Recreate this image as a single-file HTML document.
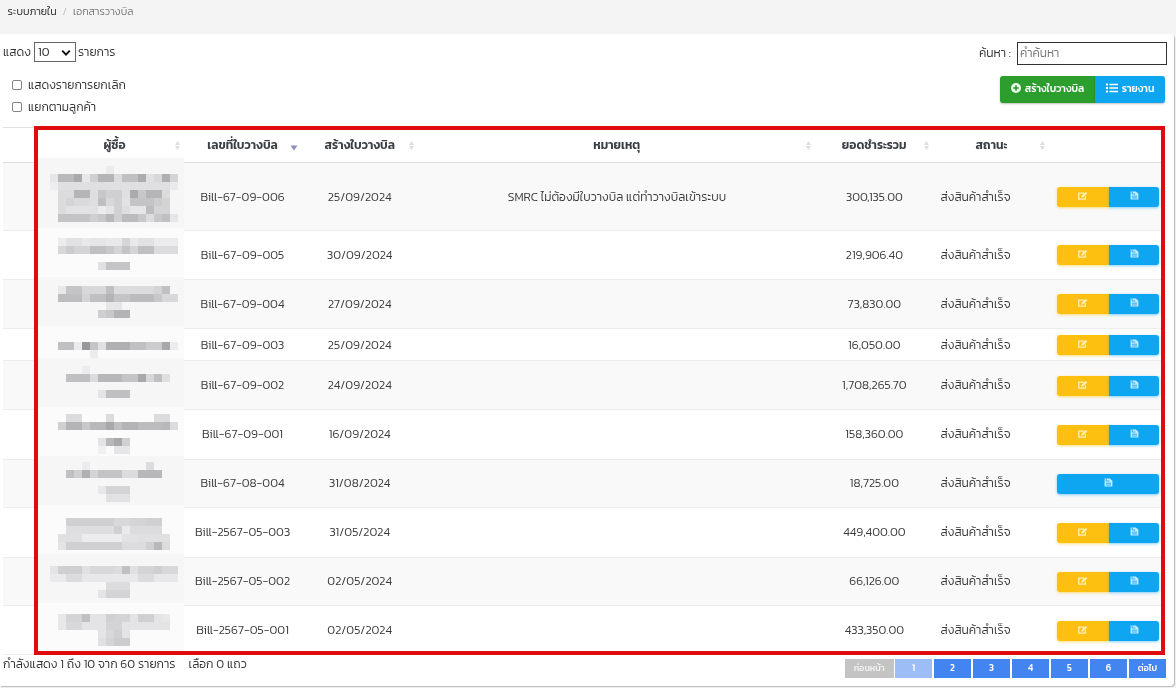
<!DOCTYPE html>
<html lang="th">
<head>
<meta charset="utf-8">
<title>เอกสารวางบิล</title>
<style>
*{box-sizing:border-box;margin:0;padding:0}
html,body{width:1176px;height:688px;overflow:hidden;background:#f4f4f4}
body{position:relative;font-family:"Kanit","Prompt","Liberation Sans","Noto Sans Thai","Loma",sans-serif;font-weight:300;font-size:12.1px;color:#3a3a3a;line-height:1}
.wrap{position:absolute;left:0;top:0;width:1176px;height:688px;overflow:hidden;will-change:transform}
.abs{position:absolute;white-space:nowrap}
.card{position:absolute;left:0;top:34px;width:1174px;height:652px;background:#fff;border-radius:0 4px 4px 0;box-shadow:1px 1px 1px rgba(0,0,0,.24)}
.bc{left:7.6px;top:3px;height:16px;line-height:16px;font-size:10.6px;color:#222}
.bc .s{color:#bbb;padding:0 6px}
.bc .c{color:#777}
.lbl{font-size:12.1px;line-height:20px;height:20px;color:#333}
.sel{left:34px;top:42px;width:42px;height:20px;border:1px solid #666;border-radius:0;background:#fff;font-size:12px;line-height:18px;padding-left:3px;color:#222}
.cb{width:9.5px;height:9.5px;border:1px solid #858585;border-radius:2px;background:#fff}
.inp{left:1016.5px;top:42px;width:150.5px;height:23px;border:1px solid #333;border-radius:0;background:#fff;font-size:12px;line-height:20px;padding-left:2.5px;color:#757575}
.btn{color:#fff;font-size:10.4px;font-weight:500;text-align:center;height:27px;line-height:25px;top:76px;box-shadow:0 1px 2px rgba(0,0,0,.25)}
.g{background:#2c9e2e;left:1000px;width:95px;border-radius:3px 0 0 3px}
.b{background:#0fa6f1;left:1095px;width:70px;border-radius:0 3px 3px 0}
.tline{position:absolute;left:3px;width:1162px;height:1px;background:#e0e0e0}
.stripe{position:absolute;left:3px;width:1162px;background:#f9f9f9}
.th{font-weight:600;font-size:12px;color:#3b4046;height:34px;line-height:34px;top:128px;text-align:center;width:200px;margin-left:-100px}
.td{height:24px;line-height:24px;text-align:center;width:300px;margin-left:-150px;color:#3a3a3a}
.ab{height:20.4px}
.y{box-shadow:0 1px 3px rgba(253,192,17,.55);background:#fdc011;left:1057px;width:52px;border-radius:3px 0 0 3px}
.u{box-shadow:0 1px 3px rgba(15,166,241,.5);background:#0fa6f1;left:1109px;width:50px;border-radius:0 3px 3px 0}
.u.full{left:1057px;width:102px;border-radius:3px}
.red{position:absolute;left:34px;top:126px;width:1131px;height:529px;border:4px solid #e00b0b}
.pg{top:659px;height:19px;line-height:19px;color:#fff;font-size:9.4px;font-weight:500;text-align:center;background:#4285f0}
.info{left:3px;top:654px;height:20px;line-height:20px;font-size:12.15px;color:#333}
</style>
</head>
<body>
<div class="wrap">
<div class="card"></div>
<div class="abs bc">ระบบภายใน<span class="s">/</span><span class="c">เอกสารวางบิล</span></div>
<div class="abs lbl" style="left:3px;top:42px">แสดง</div>
<div class="abs sel">10</div>
<svg class="abs" style="left:61.4px;top:48.5px" width="10" height="8" viewBox="0 0 10 8"><path d="M1.2 1.6 L5 5.6 L8.8 1.6" fill="none" stroke="#111" stroke-width="1.9"/></svg>
<div class="abs lbl" style="left:78px;top:42px">รายการ</div>
<div class="abs cb" style="left:12px;top:80px"></div>
<div class="abs lbl" style="left:28px;top:75px">แสดงรายการยกเลิก</div>
<div class="abs cb" style="left:12px;top:102px"></div>
<div class="abs lbl" style="left:28px;top:97px">แยกตามลูกค้า</div>
<div class="abs lbl" style="left:979px;top:43px">ค้นหา :</div>
<div class="abs inp">คำค้นหา</div>
<div class="abs btn g"><svg width="10" height="10" viewBox="0 0 10 10" style="vertical-align:-1px;margin-right:4px"><circle cx="5" cy="5" r="5" fill="#e8f5e9"/><path d="M5 2.2v5.6M2.2 5h5.6" stroke="#2c9e2e" stroke-width="1.6"/></svg>สร้างใบวางบิล</div>
<div class="abs btn b"><svg width="12" height="10" viewBox="0 0 12 10" style="vertical-align:-1px;margin-right:4px"><path d="M0 1.5h2M0 5h2M0 8.5h2" stroke="#fff" stroke-width="1.8"/><path d="M3.4 1.5H12M3.4 5H12M3.4 8.5H12" stroke="#fff" stroke-width="1.6"/></svg>รายงาน</div>
<div class="tline" style="top:127px"></div>
<div class="stripe" style="top:163px;height:68px"></div>
<div class="stripe" style="top:280px;height:49px"></div>
<div class="stripe" style="top:361px;height:49px"></div>
<div class="stripe" style="top:459px;height:49px"></div>
<div class="stripe" style="top:557px;height:49px"></div>
<div class="tline" style="top:162px;background:#dcdcdc"></div>
<div class="tline" style="top:230px;background:#ededed"></div>
<div class="tline" style="top:279px;background:#ededed"></div>
<div class="tline" style="top:328px;background:#ededed"></div>
<div class="tline" style="top:360px;background:#ededed"></div>
<div class="tline" style="top:409px;background:#ededed"></div>
<div class="tline" style="top:458.5px;background:#ededed"></div>
<div class="tline" style="top:507px;background:#ededed"></div>
<div class="tline" style="top:556.5px;background:#ededed"></div>
<div class="tline" style="top:605px;background:#ededed"></div>
<div class="tline" style="top:654px;background:#ededed"></div>
<div class="abs th" style="left:114.5px">ผู้ซื้อ</div>
<svg class="abs" style="left:174.5px;top:140.5px" width="5" height="9" viewBox="0 0 5 9"><path d="M2.5 0L5 4H0z M0 5H5L2.5 9z" fill="#dedede"/></svg>
<div class="abs th" style="left:242.6px">เลขที่ใบวางบิล</div>
<svg class="abs" style="left:290px;top:145px" width="8" height="6" viewBox="0 0 8 6"><path d="M0.5 0.5h7L4 5.5z" fill="#8c8fc0"/></svg>
<div class="abs th" style="left:359.8px">สร้างใบวางบิล</div>
<svg class="abs" style="left:408.5px;top:140.5px" width="5" height="9" viewBox="0 0 5 9"><path d="M2.5 0L5 4H0z M0 5H5L2.5 9z" fill="#dedede"/></svg>
<div class="abs th" style="left:616.8px">หมายเหตุ</div>
<svg class="abs" style="left:806.1px;top:140.5px" width="5" height="9" viewBox="0 0 5 9"><path d="M2.5 0L5 4H0z M0 5H5L2.5 9z" fill="#dedede"/></svg>
<div class="abs th" style="left:874.2px">ยอดชำระรวม</div>
<svg class="abs" style="left:923.5px;top:140.5px" width="5" height="9" viewBox="0 0 5 9"><path d="M2.5 0L5 4H0z M0 5H5L2.5 9z" fill="#dedede"/></svg>
<div class="abs th" style="left:991.5px">สถานะ</div>
<svg class="abs" style="left:1040.3px;top:140.5px" width="5" height="9" viewBox="0 0 5 9"><path d="M2.5 0L5 4H0z M0 5H5L2.5 9z" fill="#dedede"/></svg>
<svg class="abs" style="left:38px;top:158px" width="146" height="493" viewBox="38 158 146 493" shape-rendering="crispEdges">
<rect x="38" y="158" width="146" height="493" fill="#fbfbfb"/>
<rect x="38" y="158" width="146" height="70" fill="#f6f6f7"/>
<rect x="38" y="277" width="146" height="49" fill="#f6f6f7"/>
<rect x="38" y="358" width="146" height="49" fill="#f6f6f7"/>
<rect x="38" y="456" width="146" height="49" fill="#f6f6f7"/>
<rect x="38" y="554" width="146" height="49" fill="#f6f6f7"/>
<rect x="106" y="166" width="8" height="8" fill="#ececef"/>
<rect x="50" y="174" width="8" height="8" fill="#e6e6e9"/>
<rect x="58" y="174" width="16" height="8" fill="#b9b9bc"/>
<rect x="74" y="174" width="8" height="8" fill="#a9a9ac"/>
<rect x="82" y="174" width="8" height="8" fill="#e8e8eb"/>
<rect x="90" y="174" width="8" height="8" fill="#d0d0d3"/>
<rect x="98" y="174" width="16" height="8" fill="#b5b5b8"/>
<rect x="114" y="174" width="8" height="8" fill="#dcdcdf"/>
<rect x="122" y="174" width="16" height="8" fill="#c0c0c3"/>
<rect x="138" y="174" width="8" height="8" fill="#acacaf"/>
<rect x="146" y="174" width="8" height="8" fill="#e0e0e3"/>
<rect x="154" y="174" width="8" height="8" fill="#d8d8db"/>
<rect x="162" y="174" width="8" height="8" fill="#b0b0b3"/>
<rect x="170" y="174" width="8" height="8" fill="#d4d4d7"/>
<rect x="50" y="182" width="8" height="8" fill="#eeeef1"/>
<rect x="58" y="182" width="112" height="8" fill="#dfdfe2"/>
<rect x="170" y="182" width="8" height="8" fill="#eaeaed"/>
<rect x="58" y="190" width="16" height="8" fill="#dcdcdf"/>
<rect x="74" y="190" width="16" height="8" fill="#b5b5b8"/>
<rect x="90" y="190" width="8" height="8" fill="#dedee1"/>
<rect x="98" y="190" width="8" height="8" fill="#c8c8cb"/>
<rect x="106" y="190" width="16" height="8" fill="#d0d0d3"/>
<rect x="122" y="190" width="8" height="8" fill="#e0e0e3"/>
<rect x="130" y="190" width="8" height="8" fill="#aaaaad"/>
<rect x="138" y="190" width="8" height="8" fill="#c8c8cb"/>
<rect x="146" y="190" width="16" height="8" fill="#b5b5b8"/>
<rect x="162" y="190" width="8" height="8" fill="#dcdcdf"/>
<rect x="58" y="198" width="8" height="8" fill="#dcdcdf"/>
<rect x="66" y="198" width="8" height="8" fill="#d4d4d7"/>
<rect x="74" y="198" width="16" height="8" fill="#dadadd"/>
<rect x="90" y="198" width="8" height="8" fill="#dedee1"/>
<rect x="98" y="198" width="8" height="8" fill="#bfbfc2"/>
<rect x="106" y="198" width="8" height="8" fill="#d8d8db"/>
<rect x="114" y="198" width="8" height="8" fill="#d0d0d3"/>
<rect x="122" y="198" width="8" height="8" fill="#e2e2e5"/>
<rect x="130" y="198" width="24" height="8" fill="#c4c4c7"/>
<rect x="154" y="198" width="8" height="8" fill="#cdcdd0"/>
<rect x="162" y="198" width="8" height="8" fill="#d4d4d7"/>
<rect x="58" y="206" width="8" height="8" fill="#dcdcdf"/>
<rect x="66" y="206" width="32" height="8" fill="#e2e2e5"/>
<rect x="98" y="206" width="8" height="8" fill="#ececef"/>
<rect x="106" y="206" width="8" height="8" fill="#e4e4e7"/>
<rect x="114" y="206" width="8" height="8" fill="#d0d0d3"/>
<rect x="122" y="206" width="8" height="8" fill="#dedee1"/>
<rect x="130" y="206" width="16" height="8" fill="#e6e6e9"/>
<rect x="146" y="206" width="8" height="8" fill="#bcbcbf"/>
<rect x="154" y="206" width="16" height="8" fill="#d4d4d7"/>
<rect x="58" y="214" width="32" height="8" fill="#c4c4c7"/>
<rect x="90" y="214" width="8" height="8" fill="#cfcfd2"/>
<rect x="98" y="214" width="8" height="8" fill="#c8c8cb"/>
<rect x="106" y="214" width="8" height="8" fill="#b8b8bb"/>
<rect x="114" y="214" width="8" height="8" fill="#d0d0d3"/>
<rect x="122" y="214" width="16" height="8" fill="#bbbbbe"/>
<rect x="138" y="214" width="8" height="8" fill="#c8c8cb"/>
<rect x="146" y="214" width="8" height="8" fill="#dcdcdf"/>
<rect x="154" y="214" width="8" height="8" fill="#c8c8cb"/>
<rect x="162" y="214" width="8" height="8" fill="#c0c0c3"/>
<rect x="170" y="214" width="8" height="8" fill="#e6e6e9"/>
<rect x="58" y="238" width="8" height="8" fill="#ececef"/>
<rect x="66" y="238" width="16" height="8" fill="#e2e2e5"/>
<rect x="82" y="238" width="8" height="8" fill="#e9e9ec"/>
<rect x="90" y="238" width="16" height="8" fill="#e5e5e8"/>
<rect x="106" y="238" width="16" height="8" fill="#e9e9ec"/>
<rect x="122" y="238" width="8" height="8" fill="#d6d6d9"/>
<rect x="130" y="238" width="8" height="8" fill="#e9e9ec"/>
<rect x="138" y="238" width="16" height="8" fill="#e2e2e5"/>
<rect x="154" y="238" width="24" height="8" fill="#ebebee"/>
<rect x="58" y="246" width="8" height="8" fill="#d8d8db"/>
<rect x="66" y="246" width="8" height="8" fill="#cccccf"/>
<rect x="74" y="246" width="16" height="8" fill="#d4d4d7"/>
<rect x="90" y="246" width="16" height="8" fill="#c0c0c3"/>
<rect x="106" y="246" width="8" height="8" fill="#c8c8cb"/>
<rect x="114" y="246" width="8" height="8" fill="#d4d4d7"/>
<rect x="122" y="246" width="8" height="8" fill="#c4c4c7"/>
<rect x="130" y="246" width="8" height="8" fill="#d4d4d7"/>
<rect x="138" y="246" width="16" height="8" fill="#c0c0c3"/>
<rect x="154" y="246" width="24" height="8" fill="#dcdcdf"/>
<rect x="98" y="262" width="8" height="8" fill="#e0e0e3"/>
<rect x="106" y="262" width="24" height="8" fill="#c4c4c7"/>
<rect x="58" y="286" width="8" height="8" fill="#e8e8eb"/>
<rect x="66" y="286" width="16" height="8" fill="#c4c4c7"/>
<rect x="82" y="286" width="24" height="8" fill="#d8d8db"/>
<rect x="106" y="286" width="8" height="8" fill="#c0c0c3"/>
<rect x="114" y="286" width="40" height="8" fill="#dcdcdf"/>
<rect x="154" y="286" width="8" height="8" fill="#d4d4d7"/>
<rect x="162" y="286" width="8" height="8" fill="#c0c0c3"/>
<rect x="58" y="294" width="24" height="8" fill="#bebec1"/>
<rect x="82" y="294" width="8" height="8" fill="#d4d4d7"/>
<rect x="90" y="294" width="16" height="8" fill="#c0c0c3"/>
<rect x="106" y="294" width="8" height="8" fill="#b4b4b7"/>
<rect x="114" y="294" width="16" height="8" fill="#c4c4c7"/>
<rect x="130" y="294" width="24" height="8" fill="#bcbcbf"/>
<rect x="154" y="294" width="8" height="8" fill="#c8c8cb"/>
<rect x="162" y="294" width="16" height="8" fill="#d8d8db"/>
<rect x="106" y="302" width="16" height="8" fill="#e6e6e9"/>
<rect x="98" y="310" width="8" height="8" fill="#cfcfd2"/>
<rect x="106" y="310" width="8" height="8" fill="#c8c8cb"/>
<rect x="114" y="310" width="16" height="8" fill="#b4b4b7"/>
<rect x="58" y="342" width="16" height="8" fill="#c0c0c3"/>
<rect x="74" y="342" width="8" height="8" fill="#ececef"/>
<rect x="82" y="342" width="8" height="8" fill="#98989b"/>
<rect x="90" y="342" width="8" height="8" fill="#c4c4c7"/>
<rect x="98" y="342" width="8" height="8" fill="#e0e0e3"/>
<rect x="106" y="342" width="24" height="8" fill="#b0b0b3"/>
<rect x="130" y="342" width="16" height="8" fill="#c0c0c3"/>
<rect x="146" y="342" width="16" height="8" fill="#cccccf"/>
<rect x="162" y="342" width="8" height="8" fill="#a8a8ab"/>
<rect x="170" y="342" width="8" height="8" fill="#ececef"/>
<rect x="90" y="350" width="8" height="8" fill="#ececef"/>
<rect x="82" y="366" width="8" height="8" fill="#ececef"/>
<rect x="66" y="374" width="24" height="8" fill="#c0c0c3"/>
<rect x="90" y="374" width="8" height="8" fill="#dcdcdf"/>
<rect x="98" y="374" width="24" height="8" fill="#b8b8bb"/>
<rect x="122" y="374" width="16" height="8" fill="#c4c4c7"/>
<rect x="138" y="374" width="8" height="8" fill="#a8a8ab"/>
<rect x="146" y="374" width="8" height="8" fill="#d8d8db"/>
<rect x="154" y="374" width="8" height="8" fill="#c0c0c3"/>
<rect x="162" y="374" width="8" height="8" fill="#e0e0e3"/>
<rect x="98" y="390" width="8" height="8" fill="#e4e4e7"/>
<rect x="106" y="390" width="24" height="8" fill="#c0c0c3"/>
<rect x="66" y="414" width="16" height="8" fill="#dcdcdf"/>
<rect x="106" y="414" width="8" height="8" fill="#dcdcdf"/>
<rect x="154" y="414" width="16" height="8" fill="#dcdcdf"/>
<rect x="58" y="422" width="8" height="8" fill="#d0d0d3"/>
<rect x="66" y="422" width="16" height="8" fill="#b4b4b7"/>
<rect x="82" y="422" width="8" height="8" fill="#c8c8cb"/>
<rect x="90" y="422" width="16" height="8" fill="#b8b8bb"/>
<rect x="106" y="422" width="8" height="8" fill="#a8a8ab"/>
<rect x="114" y="422" width="8" height="8" fill="#c0c0c3"/>
<rect x="122" y="422" width="16" height="8" fill="#b4b4b7"/>
<rect x="138" y="422" width="24" height="8" fill="#bcbcbf"/>
<rect x="162" y="422" width="8" height="8" fill="#b8b8bb"/>
<rect x="170" y="422" width="8" height="8" fill="#dcdcdf"/>
<rect x="98" y="438" width="8" height="8" fill="#e4e4e7"/>
<rect x="106" y="438" width="8" height="8" fill="#b8b8bb"/>
<rect x="114" y="438" width="8" height="8" fill="#a8a8ab"/>
<rect x="122" y="438" width="8" height="8" fill="#d0d0d3"/>
<rect x="98" y="446" width="8" height="8" fill="#f0f0f3"/>
<rect x="114" y="446" width="16" height="8" fill="#e6e6e9"/>
<rect x="82" y="462" width="8" height="8" fill="#ececef"/>
<rect x="146" y="462" width="8" height="8" fill="#dcdcdf"/>
<rect x="66" y="470" width="8" height="8" fill="#c0c0c3"/>
<rect x="74" y="470" width="8" height="8" fill="#d0d0d3"/>
<rect x="82" y="470" width="8" height="8" fill="#b0b0b3"/>
<rect x="90" y="470" width="8" height="8" fill="#d4d4d7"/>
<rect x="98" y="470" width="24" height="8" fill="#c4c4c7"/>
<rect x="122" y="470" width="16" height="8" fill="#dcdcdf"/>
<rect x="138" y="470" width="24" height="8" fill="#b8b8bb"/>
<rect x="98" y="486" width="8" height="8" fill="#e8e8eb"/>
<rect x="106" y="486" width="24" height="8" fill="#d4d4d7"/>
<rect x="106" y="494" width="24" height="8" fill="#e2e2e5"/>
<rect x="66" y="518" width="48" height="8" fill="#d0d0d3"/>
<rect x="114" y="518" width="16" height="8" fill="#d8d8db"/>
<rect x="130" y="518" width="16" height="8" fill="#d4d4d7"/>
<rect x="146" y="518" width="16" height="8" fill="#d0d0d3"/>
<rect x="66" y="526" width="48" height="8" fill="#dedee1"/>
<rect x="114" y="526" width="8" height="8" fill="#d0d0d3"/>
<rect x="122" y="526" width="8" height="8" fill="#eaeaed"/>
<rect x="130" y="526" width="32" height="8" fill="#dcdcdf"/>
<rect x="58" y="534" width="24" height="8" fill="#e0e0e3"/>
<rect x="82" y="534" width="40" height="8" fill="#ececef"/>
<rect x="122" y="534" width="16" height="8" fill="#e2e2e5"/>
<rect x="138" y="534" width="32" height="8" fill="#e0e0e3"/>
<rect x="58" y="542" width="8" height="8" fill="#e4e4e7"/>
<rect x="66" y="542" width="56" height="8" fill="#d0d0d3"/>
<rect x="122" y="542" width="24" height="8" fill="#dcdcdf"/>
<rect x="146" y="542" width="8" height="8" fill="#d0d0d3"/>
<rect x="154" y="542" width="8" height="8" fill="#b8b8bb"/>
<rect x="162" y="542" width="8" height="8" fill="#dcdcdf"/>
<rect x="50" y="566" width="8" height="8" fill="#e4e4e7"/>
<rect x="58" y="566" width="24" height="8" fill="#cfcfd2"/>
<rect x="82" y="566" width="8" height="8" fill="#e0e0e3"/>
<rect x="90" y="566" width="24" height="8" fill="#d8d8db"/>
<rect x="114" y="566" width="8" height="8" fill="#dcdcdf"/>
<rect x="122" y="566" width="8" height="8" fill="#c0c0c3"/>
<rect x="130" y="566" width="8" height="8" fill="#e0e0e3"/>
<rect x="138" y="566" width="16" height="8" fill="#d4d4d7"/>
<rect x="154" y="566" width="8" height="8" fill="#cfcfd2"/>
<rect x="162" y="566" width="16" height="8" fill="#d8d8db"/>
<rect x="50" y="574" width="16" height="8" fill="#eaeaed"/>
<rect x="66" y="574" width="16" height="8" fill="#dcdcdf"/>
<rect x="82" y="574" width="56" height="8" fill="#e8e8eb"/>
<rect x="138" y="574" width="16" height="8" fill="#dcdcdf"/>
<rect x="154" y="574" width="24" height="8" fill="#e8e8eb"/>
<rect x="106" y="582" width="24" height="8" fill="#dcdcdf"/>
<rect x="98" y="590" width="8" height="8" fill="#e4e4e7"/>
<rect x="106" y="590" width="24" height="8" fill="#d4d4d7"/>
<rect x="58" y="614" width="8" height="8" fill="#e8e8eb"/>
<rect x="66" y="614" width="16" height="8" fill="#d4d4d7"/>
<rect x="82" y="614" width="8" height="8" fill="#c0c0c3"/>
<rect x="90" y="614" width="16" height="8" fill="#e4e4e7"/>
<rect x="106" y="614" width="8" height="8" fill="#d0d0d3"/>
<rect x="114" y="614" width="16" height="8" fill="#d4d4d7"/>
<rect x="130" y="614" width="8" height="8" fill="#e4e4e7"/>
<rect x="138" y="614" width="16" height="8" fill="#d0d0d3"/>
<rect x="154" y="614" width="8" height="8" fill="#e4e4e7"/>
<rect x="162" y="614" width="8" height="8" fill="#e8e8eb"/>
<rect x="58" y="622" width="8" height="8" fill="#e8e8eb"/>
<rect x="66" y="622" width="16" height="8" fill="#d8d8db"/>
<rect x="82" y="622" width="24" height="8" fill="#e4e4e7"/>
<rect x="106" y="622" width="16" height="8" fill="#d4d4d7"/>
<rect x="122" y="622" width="48" height="8" fill="#e4e4e7"/>
<rect x="98" y="630" width="8" height="8" fill="#e4e4e7"/>
<rect x="106" y="630" width="8" height="8" fill="#d8d8db"/>
<rect x="114" y="630" width="8" height="8" fill="#d0d0d3"/>
<rect x="122" y="630" width="8" height="8" fill="#e4e4e7"/>
<rect x="98" y="638" width="8" height="8" fill="#e0e0e3"/>
<rect x="106" y="638" width="8" height="8" fill="#d4d4d7"/>
<rect x="114" y="638" width="16" height="8" fill="#cccccf"/>
</svg>
<div class="abs td" style="left:242.5px;top:185px">Bill-67-09-006</div>
<div class="abs td" style="left:359.7px;top:185px">25/09/2024</div>
<div class="abs td" style="left:616.9px;top:185px">SMRC ไม่ต้องมีใบวางบิล แต่ทำวางบิลเข้าระบบ</div>
<div class="abs td" style="left:874.4px;top:185px">300,135.00</div>
<div class="abs td" style="left:975.6px;top:185px">ส่งสินค้าสำเร็จ</div>
<div class="abs ab y" style="top:187px"></div>
<div class="abs ab u" style="top:187px"></div>
<svg class="abs" style="left:1077.6px;top:192px;opacity:.8" width="10" height="8" viewBox="0 0 10 8"><path d="M6.2 1.2H0.8v6h6.6V4.2" fill="none" stroke="#fffbe8" stroke-width="1.3"/><path d="M3.2 5.6l0.6-2L7.8 0l1.5 1.4L5.2 5.2z" fill="#fffbe8"/></svg>
<svg class="abs" style="left:1129.8px;top:191px;opacity:.85" width="9" height="9" viewBox="0 0 9 9"><path d="M0.6 0.4h5.2l2.6 2.4v5.8H0.6z" fill="#e6f6ff"/><path d="M2.2 0.4v2.6h3.2M2 5.2h5M2 7h5" fill="none" stroke="#2fb0f2" stroke-width="1"/></svg>
<div class="abs td" style="left:242.5px;top:243px">Bill-67-09-005</div>
<div class="abs td" style="left:359.7px;top:243px">30/09/2024</div>
<div class="abs td" style="left:874.4px;top:243px">219,906.40</div>
<div class="abs td" style="left:975.6px;top:243px">ส่งสินค้าสำเร็จ</div>
<div class="abs ab y" style="top:245px"></div>
<div class="abs ab u" style="top:245px"></div>
<svg class="abs" style="left:1077.6px;top:250px;opacity:.8" width="10" height="8" viewBox="0 0 10 8"><path d="M6.2 1.2H0.8v6h6.6V4.2" fill="none" stroke="#fffbe8" stroke-width="1.3"/><path d="M3.2 5.6l0.6-2L7.8 0l1.5 1.4L5.2 5.2z" fill="#fffbe8"/></svg>
<svg class="abs" style="left:1129.8px;top:249px;opacity:.85" width="9" height="9" viewBox="0 0 9 9"><path d="M0.6 0.4h5.2l2.6 2.4v5.8H0.6z" fill="#e6f6ff"/><path d="M2.2 0.4v2.6h3.2M2 5.2h5M2 7h5" fill="none" stroke="#2fb0f2" stroke-width="1"/></svg>
<div class="abs td" style="left:242.5px;top:292px">Bill-67-09-004</div>
<div class="abs td" style="left:359.7px;top:292px">27/09/2024</div>
<div class="abs td" style="left:874.4px;top:292px">73,830.00</div>
<div class="abs td" style="left:975.6px;top:292px">ส่งสินค้าสำเร็จ</div>
<div class="abs ab y" style="top:294px"></div>
<div class="abs ab u" style="top:294px"></div>
<svg class="abs" style="left:1077.6px;top:299px;opacity:.8" width="10" height="8" viewBox="0 0 10 8"><path d="M6.2 1.2H0.8v6h6.6V4.2" fill="none" stroke="#fffbe8" stroke-width="1.3"/><path d="M3.2 5.6l0.6-2L7.8 0l1.5 1.4L5.2 5.2z" fill="#fffbe8"/></svg>
<svg class="abs" style="left:1129.8px;top:298px;opacity:.85" width="9" height="9" viewBox="0 0 9 9"><path d="M0.6 0.4h5.2l2.6 2.4v5.8H0.6z" fill="#e6f6ff"/><path d="M2.2 0.4v2.6h3.2M2 5.2h5M2 7h5" fill="none" stroke="#2fb0f2" stroke-width="1"/></svg>
<div class="abs td" style="left:242.5px;top:333px">Bill-67-09-003</div>
<div class="abs td" style="left:359.7px;top:333px">25/09/2024</div>
<div class="abs td" style="left:874.4px;top:333px">16,050.00</div>
<div class="abs td" style="left:975.6px;top:333px">ส่งสินค้าสำเร็จ</div>
<div class="abs ab y" style="top:335px"></div>
<div class="abs ab u" style="top:335px"></div>
<svg class="abs" style="left:1077.6px;top:340px;opacity:.8" width="10" height="8" viewBox="0 0 10 8"><path d="M6.2 1.2H0.8v6h6.6V4.2" fill="none" stroke="#fffbe8" stroke-width="1.3"/><path d="M3.2 5.6l0.6-2L7.8 0l1.5 1.4L5.2 5.2z" fill="#fffbe8"/></svg>
<svg class="abs" style="left:1129.8px;top:339px;opacity:.85" width="9" height="9" viewBox="0 0 9 9"><path d="M0.6 0.4h5.2l2.6 2.4v5.8H0.6z" fill="#e6f6ff"/><path d="M2.2 0.4v2.6h3.2M2 5.2h5M2 7h5" fill="none" stroke="#2fb0f2" stroke-width="1"/></svg>
<div class="abs td" style="left:242.5px;top:373px">Bill-67-09-002</div>
<div class="abs td" style="left:359.7px;top:373px">24/09/2024</div>
<div class="abs td" style="left:874.4px;top:373px">1,708,265.70</div>
<div class="abs td" style="left:975.6px;top:373px">ส่งสินค้าสำเร็จ</div>
<div class="abs ab y" style="top:376px"></div>
<div class="abs ab u" style="top:376px"></div>
<svg class="abs" style="left:1077.6px;top:381px;opacity:.8" width="10" height="8" viewBox="0 0 10 8"><path d="M6.2 1.2H0.8v6h6.6V4.2" fill="none" stroke="#fffbe8" stroke-width="1.3"/><path d="M3.2 5.6l0.6-2L7.8 0l1.5 1.4L5.2 5.2z" fill="#fffbe8"/></svg>
<svg class="abs" style="left:1129.8px;top:380px;opacity:.85" width="9" height="9" viewBox="0 0 9 9"><path d="M0.6 0.4h5.2l2.6 2.4v5.8H0.6z" fill="#e6f6ff"/><path d="M2.2 0.4v2.6h3.2M2 5.2h5M2 7h5" fill="none" stroke="#2fb0f2" stroke-width="1"/></svg>
<div class="abs td" style="left:242.5px;top:422px">Bill-67-09-001</div>
<div class="abs td" style="left:359.7px;top:422px">16/09/2024</div>
<div class="abs td" style="left:874.4px;top:422px">158,360.00</div>
<div class="abs td" style="left:975.6px;top:422px">ส่งสินค้าสำเร็จ</div>
<div class="abs ab y" style="top:425px"></div>
<div class="abs ab u" style="top:425px"></div>
<svg class="abs" style="left:1077.6px;top:430px;opacity:.8" width="10" height="8" viewBox="0 0 10 8"><path d="M6.2 1.2H0.8v6h6.6V4.2" fill="none" stroke="#fffbe8" stroke-width="1.3"/><path d="M3.2 5.6l0.6-2L7.8 0l1.5 1.4L5.2 5.2z" fill="#fffbe8"/></svg>
<svg class="abs" style="left:1129.8px;top:429px;opacity:.85" width="9" height="9" viewBox="0 0 9 9"><path d="M0.6 0.4h5.2l2.6 2.4v5.8H0.6z" fill="#e6f6ff"/><path d="M2.2 0.4v2.6h3.2M2 5.2h5M2 7h5" fill="none" stroke="#2fb0f2" stroke-width="1"/></svg>
<div class="abs td" style="left:242.5px;top:471px">Bill-67-08-004</div>
<div class="abs td" style="left:359.7px;top:471px">31/08/2024</div>
<div class="abs td" style="left:874.4px;top:471px">18,725.00</div>
<div class="abs td" style="left:975.6px;top:471px">ส่งสินค้าสำเร็จ</div>
<div class="abs ab u full" style="top:474px"></div>
<svg class="abs" style="left:1103.5px;top:478px;opacity:.85" width="9" height="9" viewBox="0 0 9 9"><path d="M0.6 0.4h5.2l2.6 2.4v5.8H0.6z" fill="#e6f6ff"/><path d="M2.2 0.4v2.6h3.2M2 5.2h5M2 7h5" fill="none" stroke="#2fb0f2" stroke-width="1"/></svg>
<div class="abs td" style="left:242.5px;top:520px">Bill-2567-05-003</div>
<div class="abs td" style="left:359.7px;top:520px">31/05/2024</div>
<div class="abs td" style="left:874.4px;top:520px">449,400.00</div>
<div class="abs td" style="left:975.6px;top:520px">ส่งสินค้าสำเร็จ</div>
<div class="abs ab y" style="top:523px"></div>
<div class="abs ab u" style="top:523px"></div>
<svg class="abs" style="left:1077.6px;top:528px;opacity:.8" width="10" height="8" viewBox="0 0 10 8"><path d="M6.2 1.2H0.8v6h6.6V4.2" fill="none" stroke="#fffbe8" stroke-width="1.3"/><path d="M3.2 5.6l0.6-2L7.8 0l1.5 1.4L5.2 5.2z" fill="#fffbe8"/></svg>
<svg class="abs" style="left:1129.8px;top:527px;opacity:.85" width="9" height="9" viewBox="0 0 9 9"><path d="M0.6 0.4h5.2l2.6 2.4v5.8H0.6z" fill="#e6f6ff"/><path d="M2.2 0.4v2.6h3.2M2 5.2h5M2 7h5" fill="none" stroke="#2fb0f2" stroke-width="1"/></svg>
<div class="abs td" style="left:242.5px;top:569px">Bill-2567-05-002</div>
<div class="abs td" style="left:359.7px;top:569px">02/05/2024</div>
<div class="abs td" style="left:874.4px;top:569px">66,126.00</div>
<div class="abs td" style="left:975.6px;top:569px">ส่งสินค้าสำเร็จ</div>
<div class="abs ab y" style="top:572px"></div>
<div class="abs ab u" style="top:572px"></div>
<svg class="abs" style="left:1077.6px;top:577px;opacity:.8" width="10" height="8" viewBox="0 0 10 8"><path d="M6.2 1.2H0.8v6h6.6V4.2" fill="none" stroke="#fffbe8" stroke-width="1.3"/><path d="M3.2 5.6l0.6-2L7.8 0l1.5 1.4L5.2 5.2z" fill="#fffbe8"/></svg>
<svg class="abs" style="left:1129.8px;top:576px;opacity:.85" width="9" height="9" viewBox="0 0 9 9"><path d="M0.6 0.4h5.2l2.6 2.4v5.8H0.6z" fill="#e6f6ff"/><path d="M2.2 0.4v2.6h3.2M2 5.2h5M2 7h5" fill="none" stroke="#2fb0f2" stroke-width="1"/></svg>
<div class="abs td" style="left:242.5px;top:618px">Bill-2567-05-001</div>
<div class="abs td" style="left:359.7px;top:618px">02/05/2024</div>
<div class="abs td" style="left:874.4px;top:618px">433,350.00</div>
<div class="abs td" style="left:975.6px;top:618px">ส่งสินค้าสำเร็จ</div>
<div class="abs ab y" style="top:621px"></div>
<div class="abs ab u" style="top:621px"></div>
<svg class="abs" style="left:1077.6px;top:626px;opacity:.8" width="10" height="8" viewBox="0 0 10 8"><path d="M6.2 1.2H0.8v6h6.6V4.2" fill="none" stroke="#fffbe8" stroke-width="1.3"/><path d="M3.2 5.6l0.6-2L7.8 0l1.5 1.4L5.2 5.2z" fill="#fffbe8"/></svg>
<svg class="abs" style="left:1129.8px;top:625px;opacity:.85" width="9" height="9" viewBox="0 0 9 9"><path d="M0.6 0.4h5.2l2.6 2.4v5.8H0.6z" fill="#e6f6ff"/><path d="M2.2 0.4v2.6h3.2M2 5.2h5M2 7h5" fill="none" stroke="#2fb0f2" stroke-width="1"/></svg>
<div class="red"></div>
<div class="abs info">กำลังแสดง 1 ถึง 10 จาก 60 รายการ<span style="margin-left:13px">เลือก 0 แถว</span></div>
<div class="abs pg" style="left:845px;width:48.5px;background:#c4c4c4;font-size:8.9px;color:#f1f1f1">ก่อนหน้า</div>
<div class="abs pg" style="left:895.2px;width:36.7px;background:#9dbdf6">1</div>
<div class="abs pg" style="left:934px;width:37px">2</div>
<div class="abs pg" style="left:973px;width:37px">3</div>
<div class="abs pg" style="left:1012px;width:37px">4</div>
<div class="abs pg" style="left:1051px;width:37px">5</div>
<div class="abs pg" style="left:1090px;width:37px">6</div>
<div class="abs pg" style="left:1129px;width:37px;font-size:8.9px">ต่อไป</div>
</div>
</body>
</html>
